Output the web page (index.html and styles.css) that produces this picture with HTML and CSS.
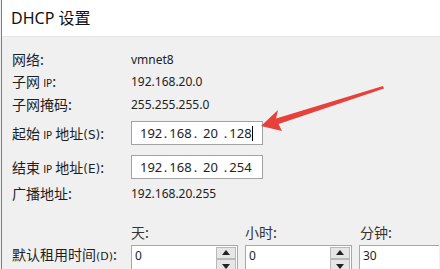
FILE: index.html
```html
<!DOCTYPE html>
<html lang="zh">
<head>
<meta charset="utf-8">
<link rel="stylesheet" href="styles.css">
</head>
<body>
<div class="window">
  <div class="titlebar">DHCP 设置</div>
  <div class="content">
    <div class="row r1"><span class="label">网络:</span><span class="value">vmnet8</span></div>
    <div class="row r2"><span class="label">子网 <span class="ip">IP</span>:</span><span class="value">192.168.20.0</span></div>
    <div class="row r3"><span class="label">子网掩码:</span><span class="value">255.255.255.0</span></div>
    <div class="row r4"><span class="label">起始 <span class="ip">IP</span> 地址<span class="acc">(S)</span>:</span>
      <div class="ipbox"><span class="o o1">192</span><span class="d">.</span><span class="o">168</span><span class="d">.</span><span class="o o3">20</span><span class="d">.</span><span class="o">128</span><span class="caret"></span></div>
    </div>
    <div class="row r5"><span class="label">结束 <span class="ip">IP</span> 地址<span class="acc">(E)</span>:</span>
      <div class="ipbox"><span class="o o1">192</span><span class="d">.</span><span class="o">168</span><span class="d">.</span><span class="o o3">20</span><span class="d">.</span><span class="o">254</span></div>
    </div>
    <div class="row r6"><span class="label">广播地址:</span><span class="value">192.168.20.255</span></div>
    <div class="row r7"><span class="label"></span>
      <span class="head h1">天:</span><span class="head h2">小时:</span><span class="head h3">分钟:</span>
    </div>
    <div class="row r8"><span class="label">默认租用时间<span class="acc small">(D)</span>:</span>
      <div class="spin"><span class="sv">0</span><span class="btns"><span class="btn up"></span><span class="btn down"></span></span></div>
      <div class="spin"><span class="sv">0</span><span class="btns"><span class="btn up"></span><span class="btn down"></span></span></div>
      <div class="spin last"><span class="sv">30</span></div>
    </div>
  </div>
  <svg class="arrow" width="440" height="269" viewBox="0 0 440 269">
    <path d="M383 86 L276 118.5 L278 110 L261 126 L282 131 L278.5 124 L384 88.5 Z" fill="#e8403a"/>
  </svg>
</div>
</body>
</html>
```

FILE: styles.css
```css
html, body {
  margin: 0;
  padding: 0;
  width: 440px;
  height: 269px;
  overflow: hidden;
  background: #f0f0f0;
}
.window {
  position: relative;
  width: 438px;
  height: 269px;
  margin-left: 1px;
  border-left: 1px solid #7d7d7d;
  background: #f0f0f0;
  font-family: "Noto Sans CJK SC", "Noto Sans", sans-serif;
  color: #1e1e1e;
}
.titlebar {
  height: 37px;
  background: #ffffff;
  box-sizing: border-box;
  padding-left: 9px;
  line-height: 36px;
  font-family: "Noto Sans", "Noto Sans CJK SC", sans-serif;
  font-size: 16px;
  color: #111;
  border-bottom: 1px solid #e6e6e6;
}
.content {
  padding-top: 11px;
  padding-left: 10px;
}
.row {
  display: flex;
  align-items: center;
}
.label {
  width: 119px;
  flex: none;
  font-size: 14px;
  color: #1e1e1e;
  white-space: nowrap;
}
.ip {
  font-family: "DejaVu Sans", sans-serif;
  font-size: 10px;
}
.acc {
  font-family: "DejaVu Sans", sans-serif;
  font-size: 12px;
}
.acc.small { font-size: 11px; }
.value {
  font-family: "Noto Sans", sans-serif;
  font-size: 12px;
  color: #222;
}
.r1, .r2 { height: 22px; }
.r3 { height: 24px; }
.r4, .r5 { height: 34px; }
.r6 { height: 18px; }
.r7 { height: 24px; margin-top: 18px; }
.r8 { height: 26px; align-items: flex-start; }
.ipbox {
  width: 132px;
  height: 24px;
  box-sizing: border-box;
  border: 1px solid #a3a3a3;
  background: #fff;
  display: flex;
  align-items: center;
  padding-left: 8px;
  font-family: "Noto Sans", sans-serif;
  font-size: 13px;
  color: #222;
  white-space: pre;
}
.ipbox .o { display: inline-block; width: 23px; text-align: center; }
.ipbox .o1 { width: 22px; text-align: left; }
.ipbox .o3 { width: 23px; }
.ipbox .d { display: inline-block; width: 7px; text-align: center; }
.caret {
  display: inline-block;
  width: 1px;
  height: 15px;
  background: #000;
  margin-left: 0;
}
.head {
  font-size: 14px;
  color: #333;
}
.h1 { width: 114px; }
.h2 { width: 115px; }
.spin {
  width: 107px;
  height: 27px;
  box-sizing: border-box;
  border: 1px solid #a8a8a8;
  border-bottom: none;
  background: #fff;
  display: flex;
  margin-right: 7px;
  margin-top: 1px;
}
.spin.last { width: 80px; margin-right: 0; border-right: none; }
.sv {
  flex: 1;
  padding-left: 3px;
  font-family: "Noto Sans", sans-serif;
  font-size: 12px;
  line-height: 20px;
}
.btns {
  width: 20px;
  display: flex;
  flex-direction: column;
  margin-right: 1px;
}
.btn {
  height: 12px;
  box-sizing: border-box;
  border: 1px solid #b9b9b9;
  background: #e6e6e6;
  position: relative;
  margin-top: 1px;
}
.btn.down { border-top: 1px solid #b9b9b9; margin-top: 0; height: 14px; }
.btn::after {
  content: "";
  position: absolute;
  left: 5px;
  width: 0;
  height: 0;
  border-left: 4px solid transparent;
  border-right: 4px solid transparent;
}
.btn.up::after { top: 2px; border-bottom: 5px solid #222; }
.btn.down::after { top: 4px; border-top: 5px solid #222; }
.arrow {
  position: absolute;
  left: -2px;
  top: 0;
}
```
